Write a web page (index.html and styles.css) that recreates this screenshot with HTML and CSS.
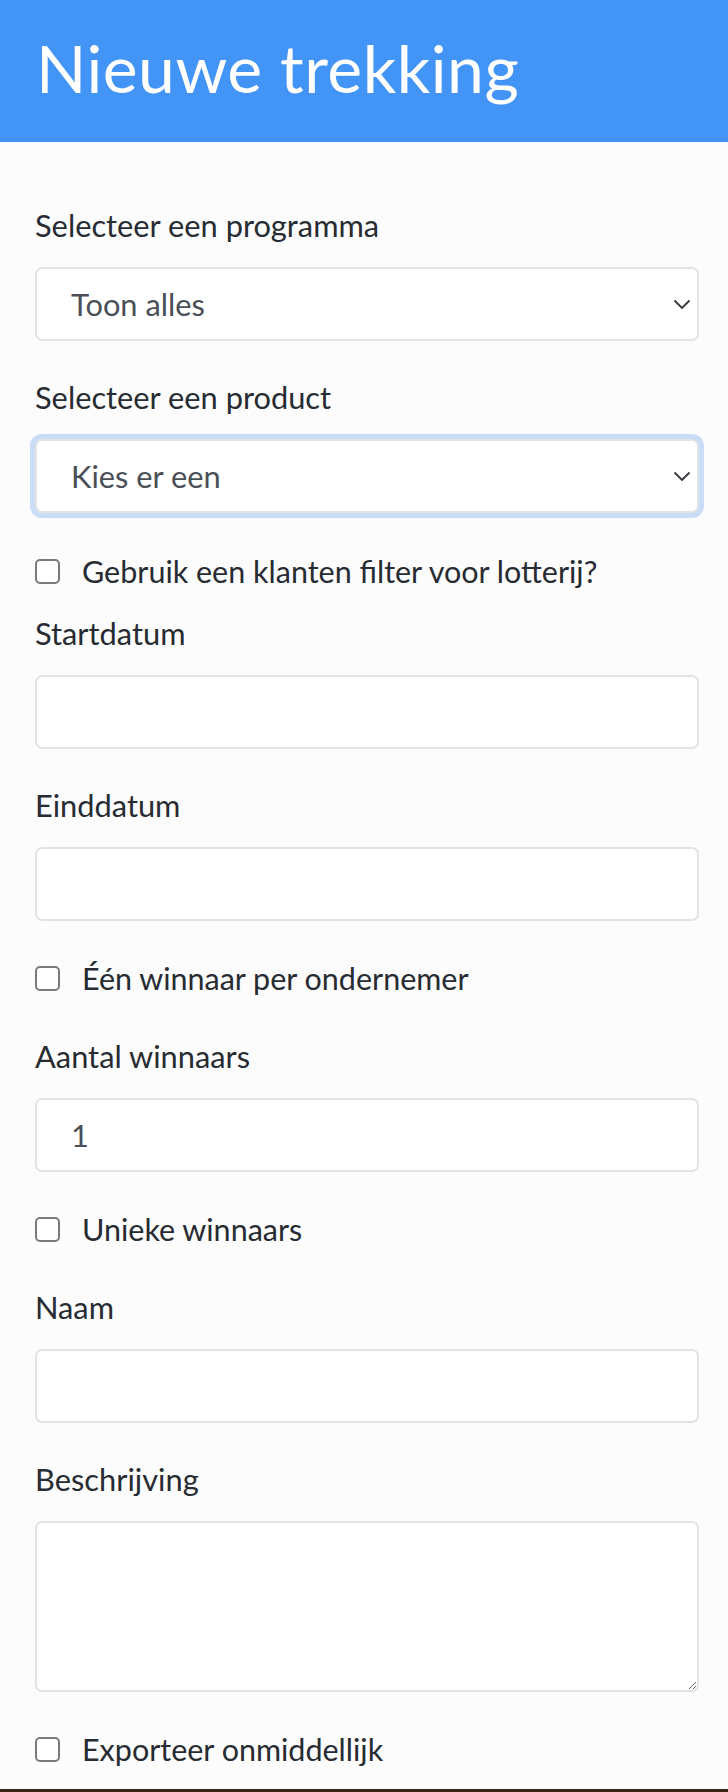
FILE: index.html
```html
<!DOCTYPE html>
<html lang="nl">
<head>
    <meta charset="UTF-8">
    <meta name="viewport" content="width=device-width, initial-scale=1.0">
    <title>Nieuwe trekking</title>
    <link rel="stylesheet" href="styles.css">
</head>
<body>
    <div class="topbar">
        <h1>Nieuwe trekking</h1>
    </div>

    <form class="form">
        <div class="group">
            <label class="label">Selecteer een programma</label>
            <div class="select-wrap">
                <select class="control">
                    <option>Toon alles</option>
                </select>
                <svg class="chevron" viewBox="0 0 18 11" width="18" height="11"><path d="M1.5 1.5 9 9l7.5-7.5" fill="none" stroke="#343a40" stroke-width="1.9"/></svg>
            </div>
        </div>

        <div class="group">
            <label class="label">Selecteer een product</label>
            <div class="select-wrap">
                <select class="control focus">
                    <option>Kies er een</option>
                </select>
                <svg class="chevron" viewBox="0 0 18 11" width="18" height="11"><path d="M1.5 1.5 9 9l7.5-7.5" fill="none" stroke="#343a40" stroke-width="1.9"/></svg>
            </div>
        </div>

        <label class="check first">
            <input type="checkbox">
            <span>Gebruik een klanten filter voor lotterij?</span>
        </label>

        <div class="group">
            <label class="label">Startdatum</label>
            <input class="control" type="text">
        </div>

        <div class="group">
            <label class="label">Einddatum</label>
            <input class="control" type="text">
        </div>

        <label class="check">
            <input type="checkbox">
            <span>Één winnaar per ondernemer</span>
        </label>

        <div class="group">
            <label class="label">Aantal winnaars</label>
            <input class="control" type="text" value="1">
        </div>

        <label class="check">
            <input type="checkbox">
            <span>Unieke winnaars</span>
        </label>

        <div class="group">
            <label class="label">Naam</label>
            <input class="control" type="text">
        </div>

        <div class="group">
            <label class="label">Beschrijving</label>
            <textarea class="control area"></textarea>
        </div>

        <label class="check last">
            <input type="checkbox">
            <span>Exporteer onmiddellijk</span>
        </label>
    </form>

    <div class="bottombar"></div>
</body>
</html>
```

FILE: styles.css
```css
/* pagina */
body {
    margin: 0;
    padding: 0;
    background-color: #fcfcfc;
    font-family: "Lato", "Noto Sans", sans-serif;
    color: #272b32;
    height: 1792px;
    overflow: hidden;
    position: relative;
}
.topbar {
    background-color: #4394f7;
    height: 142px;
    padding: 0 36px;
    box-sizing: border-box;
    display: flex;
    align-items: center;
}
.topbar h1 {
    margin: 0;
    color: #fff;
    font-family: "Lato", sans-serif;
    font-weight: 400;
    font-size: 66px;
    line-height: 1;
    letter-spacing: 0.5px;
    padding-bottom: 6px;
}
.form {
    padding: 64px 29px 0 35px;
}
.group {
    margin-bottom: 37px;
}
.label {
    display: block;
    font-size: 30.8px;
    line-height: 40px;
    margin-bottom: 21px;
}
.select-wrap {
    position: relative;
}
.control {
    display: block;
    width: 100%;
    box-sizing: border-box;
    height: 74px;
    margin: 0;
    padding: 0 34px;
    background-color: #fff;
    border: 2px solid #e3e3e3;
    border-radius: 7px;
    font-family: "Lato", "Noto Sans", sans-serif;
    font-size: 30.8px;
    color: #4a4f57;
    appearance: none;
    -webkit-appearance: none;
    outline: none;
}
.control.focus {
    box-shadow: 0 0 0 5px #c9dcf8;
}
.area {
    height: 171px;
    padding: 12px 34px;
    resize: vertical;
}
.chevron {
    position: absolute;
    right: 8px;
    top: 32px;
}
.check {
    display: flex;
    align-items: center;
    height: 40px;
    margin-bottom: 39px;
    font-size: 30.5px;
}
.check.first {
    margin-top: 38px;
    margin-bottom: 23px;
}
.check.last {
    margin-top: 0;
}
.check input {
    appearance: none;
    -webkit-appearance: none;
    width: 25px;
    height: 25px;
    margin: 0 22px 0 0;
    border: 2px solid #7a7a7a;
    border-radius: 5px;
    background-color: #fff;
    box-sizing: border-box;
    flex: none;
}
.bottombar {
    position: absolute;
    left: 0;
    right: 0;
    bottom: 0;
    height: 3px;
    background-color: #3a2419;
}
```
